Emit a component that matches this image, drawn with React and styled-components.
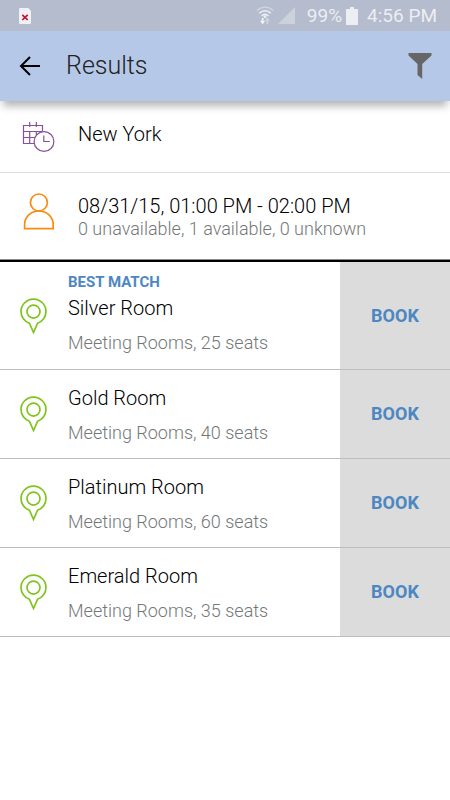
import React from 'react';
import styled, { createGlobalStyle } from 'styled-components';

const GlobalStyle = createGlobalStyle`
  * { box-sizing: border-box; }
  body { margin: 0; background: #fff; color: #000; font-family: Roboto, sans-serif; font-weight: 300; }
  h1, h2, p, ul { margin: 0; padding: 0; font-weight: 300; }
`;

const StatusBar = styled.div`
  display: flex;
  align-items: center;
  justify-content: space-between;
  height: 31px;
  padding: 0 13px 0 19px;
  background: #b4bccd;
  color: #eceef3;
  font: 400 19px/24px Roboto, sans-serif;
`;

const StatusGroup = styled.div`
  display: flex;
  align-items: center;
`;

const Reading = styled.span`
  margin-left: ${({ $gap }) => $gap}px;
`;

const StatusIcon = styled.svg`
  display: block;
  margin-left: ${({ $gap = 0 }) => $gap}px;
`;

const AppBar = styled.header`
  position: relative;
  display: flex;
  align-items: center;
  height: 70px;
  padding: 0 18px;
  background: #b5c8e8;
  box-shadow: 0 8px 8px -3px rgba(0, 0, 0, 0.3);
`;

const IconButton = styled.button`
  display: flex;
  padding: 0;
  border: 0;
  background: none;
  cursor: pointer;
`;

const Title = styled.h1`
  flex: 1;
  margin-left: 24px;
  font-size: 25px;
  line-height: 32px;
  color: #222;
`;

const Detail = styled.section`
  display: flex;
  min-height: ${({ $tall }) => ($tall ? 87 : 72)}px;
  padding: 20px 20px 16px 22px;
  border-bottom: 1px solid ${({ $tall }) => ($tall ? '#888' : '#ddd')};
`;

const DetailText = styled.div`
  margin-left: 22px;
`;

const Primary = styled.h2`
  font-size: 20px;
  line-height: 26px;
`;

const Secondary = styled.p`
  font-size: 18px;
  line-height: 20px;
  color: #747878;
`;

const RoomList = styled.ul`
  list-style: none;
  border-top: 2px solid #000;
`;

const RoomRow = styled.li`
  display: grid;
  grid-template-columns: 68px 1fr 110px;
  min-height: 89px;
  border-bottom: 1px solid #bdbdbd;
`;

const PinCell = styled.div`
  display: flex;
  align-items: center;
  padding-left: 19px;
`;

const RoomText = styled.div`
  display: flex;
  flex-direction: column;
  padding: ${({ $best }) => ($best ? '7px 0 16px' : '15px 0')};
`;

const BestMatch = styled.strong`
  font-size: 15px;
  line-height: 26px;
  font-weight: 700;
  color: #4d87c2;
`;

const RoomMeta = styled(Secondary)`
  margin-top: 12px;
`;

const BookButton = styled.button`
  border: 0;
  background: #dcdcdc;
  color: #4d87c2;
  font: 700 18px/24px Roboto, sans-serif;
  cursor: pointer;
`;

const rooms = [
  { name: 'Silver Room', seats: 25, best: true },
  { name: 'Gold Room', seats: 40 },
  { name: 'Platinum Room', seats: 60 },
  { name: 'Emerald Room', seats: 35 },
];

const FileIcon = () => (
  <StatusIcon width="12" height="16" viewBox="0 0 12 16" aria-hidden="true">
    <path d="M1 0h8.5L12 3v12a1 1 0 0 1-1 1H1a1 1 0 0 1-1-1V1a1 1 0 0 1 1-1z" fill="#eff1f5" />
    <path d="M3.3 6.8l5.4 5.2M8.7 6.8L3.3 12" stroke="#c8102e" strokeWidth="1.7" />
  </StatusIcon>
);

const WifiIcon = () => (
  <StatusIcon width="18" height="19" viewBox="0 0 18 19" fill="none" aria-hidden="true">
    <path d="M.8 4.4Q9-2.6 17.2 4.4" stroke="#d0d5df" strokeWidth="1.4" />
    <path d="M3.2 7.2Q9 2.3 14.8 7.2M5.6 9.8Q9 6.9 12.4 9.8" stroke="#eceef3" strokeWidth="1.6" />
    <circle cx="9" cy="10.7" r="1.4" fill="#eceef3" />
    <path d="M5.7 12h1.8v3H9.2L6.6 18.3 4 15h1.7z" fill="#f3f4f7" />
    <path d="M11.4 11.5l2.6 3.3h-1.7V18h-1.8v-3.2H8.8z" fill="#d0d5df" />
  </StatusIcon>
);

const SignalIcon = () => (
  <StatusIcon $gap={4} width="17" height="17" viewBox="0 0 17 17" aria-hidden="true">
    <path d="M17 0v17H0z" fill="#ccd1dc" />
  </StatusIcon>
);

const BatteryIcon = () => (
  <StatusIcon $gap={4} width="12" height="18" viewBox="0 0 12 18" aria-hidden="true">
    <path d="M4 0h4v2h3a1 1 0 0 1 1 1v15H0V3a1 1 0 0 1 1-1h3z" fill="#eceef3" />
  </StatusIcon>
);

const BackIcon = () => (
  <svg width="24" height="24" viewBox="0 0 24 24" fill="none" stroke="#000" strokeWidth="2" aria-hidden="true">
    <path d="M22 12H4M12 3l-9 9 9 9" />
  </svg>
);

const FunnelIcon = () => (
  <svg width="24" height="26" viewBox="0 0 24 26" aria-hidden="true">
    <path d="M.5 0h23v2.5L14.2 11v15L9.5 22V11L.5 2.5z" fill="#666" />
  </svg>
);

const CalendarIcon = () => (
  <svg width="34" height="32" viewBox="0 0 34 32" fill="none" stroke="#894f9f" strokeWidth="1.2" aria-hidden="true">
    <path d="M20.5 10V4.5H1.5V22.5H12M1.5 10.5H20.5M1.5 16.5H13M7.7 10.5V22.5M14.3 10.5V14M7.7 1v5M14.3 1v5" />
    <circle cx="22" cy="20.5" r="9.9" />
    <path d="M21.8 14.5v6h6" />
  </svg>
);

const PersonIcon = () => (
  <svg width="34" height="38" viewBox="0 0 34 38" fill="none" stroke="#f88b13" strokeWidth="1.7" aria-hidden="true">
    <circle cx="16.9" cy="9.5" r="8.5" />
    <path d="M2.6 35.6v-4C2.6 24 9 18 16.9 18S31.2 24 31.2 31.6v4z" />
  </svg>
);

const PinIcon = () => (
  <svg width="29" height="38" viewBox="0 0 29 38" fill="none" stroke="#7fc41c" strokeWidth="1.7" aria-hidden="true">
    <path d="M10.4 26.2C5.5 24.5 2 19.900 2 14.600a12.500 12.500 0 0 1 25 0c0 5.300-3.500 9.900-8.400 11.600L14.500 35.500z" />
    <circle cx="14.5" cy="14.6" r="6.5" />
  </svg>
);

export default function App() {
  return (
    <>
      <GlobalStyle />
      <StatusBar>
        <FileIcon />
        <StatusGroup>
          <WifiIcon />
          <SignalIcon />
          <Reading $gap={12}>99%</Reading>
          <BatteryIcon />
          <Reading $gap={9}>4:56 PM</Reading>
        </StatusGroup>
      </StatusBar>
      <AppBar>
        <IconButton type="button" aria-label="Back"><BackIcon /></IconButton>
        <Title>Results</Title>
        <IconButton type="button" aria-label="Filter"><FunnelIcon /></IconButton>
      </AppBar>
      <main>
        <Detail>
          <CalendarIcon />
          <DetailText><Primary>New York</Primary></DetailText>
        </Detail>
        <Detail $tall>
          <PersonIcon />
          <DetailText>
            <Primary>08/31/15, 01:00 PM - 02:00 PM</Primary>
            <Secondary>0 unavailable, 1 available, 0 unknown</Secondary>
          </DetailText>
        </Detail>
        <RoomList>
          {rooms.map(({ name, seats, best }) => (
            <RoomRow key={name}>
              <PinCell><PinIcon /></PinCell>
              <RoomText $best={best}>
                {best && <BestMatch>BEST MATCH</BestMatch>}
                <Primary>{name}</Primary>
                <RoomMeta>Meeting Rooms, {seats} seats</RoomMeta>
              </RoomText>
              <BookButton type="button" aria-label={`Book ${name}`}>BOOK</BookButton>
            </RoomRow>
          ))}
        </RoomList>
      </main>
    </>
  );
}
